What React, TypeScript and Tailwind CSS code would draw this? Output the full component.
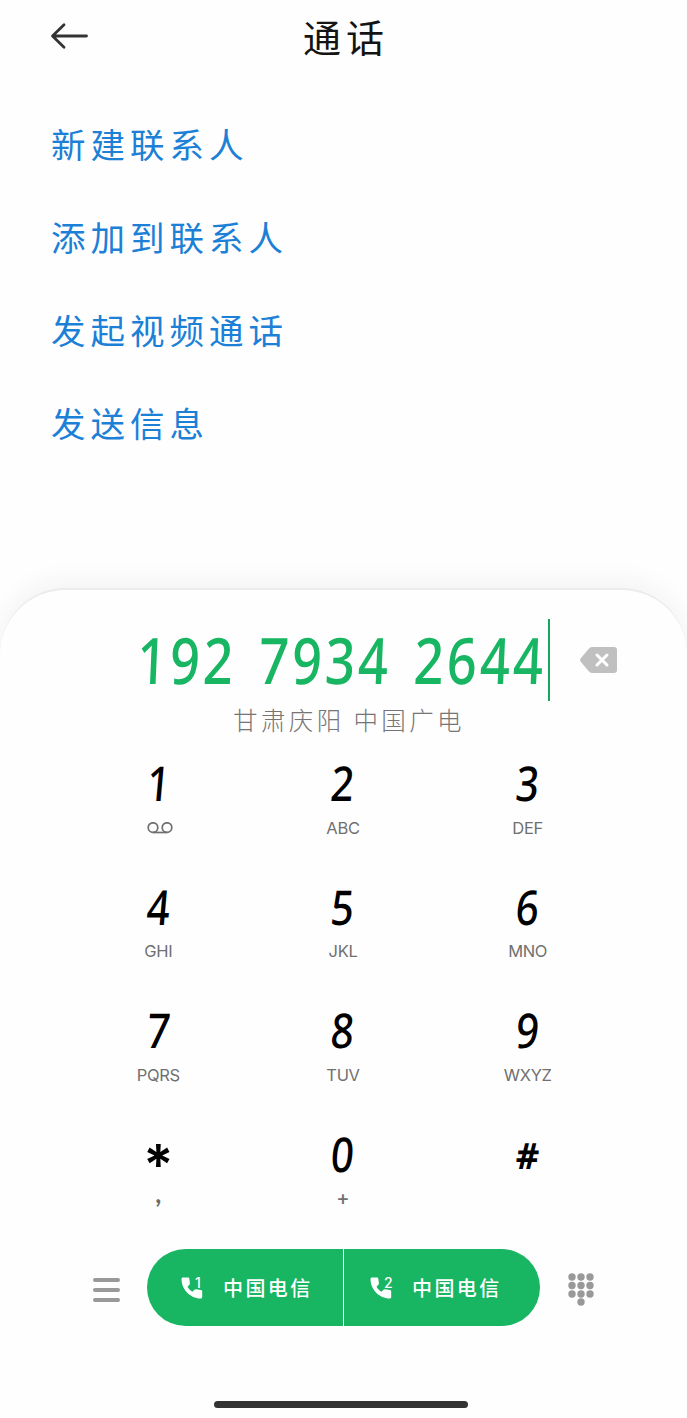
import type { ReactNode } from 'react';

const menuItems = ['新建联系人', '添加到联系人', '发起视频通话', '发送信息'];

const voicemail = (
  <svg width="26" height="12" viewBox="0 0 26 12" fill="none" stroke="currentColor" strokeWidth="1.7" className="ml-1">
    <circle cx="6" cy="5.6" r="4.8" />
    <circle cx="20" cy="5.6" r="4.8" />
    <path d="M6 10.500h14" />
  </svg>
);

const keys: { main: string; sub: ReactNode }[] = [
  { main: '1', sub: voicemail },
  { main: '2', sub: 'ABC' },
  { main: '3', sub: 'DEF' },
  { main: '4', sub: 'GHI' },
  { main: '5', sub: 'JKL' },
  { main: '6', sub: 'MNO' },
  { main: '7', sub: 'PQRS' },
  { main: '8', sub: 'TUV' },
  { main: '9', sub: 'WXYZ' },
  { main: '*', sub: ',' },
  { main: '0', sub: '+' },
  { main: '#', sub: '' },
];

function Key({ main, sub }: { main: string; sub: ReactNode }) {
  if (main === '*') {
    return (
      <button className="flex flex-col items-center h-[123.5px]">
        <span className="h-[50px] leading-[72px] text-[56px] font-semibold font-[Inter,sans-serif]">*</span>
        <span className="h-5 mt-[9px] text-[26px] leading-[10px] font-bold text-[#6b6b6b] font-[Lato,sans-serif]">{sub}</span>
      </button>
    );
  }
  return (
    <button className="flex flex-col items-center h-[123.5px]">
      <span
        className={
          main === '#'
            ? "h-[50px] leading-[54px] text-[36px] font-bold -skew-x-3 font-['Noto_Sans',sans-serif]"
            : "h-[50px] leading-[50px] text-[48px] font-medium -skew-x-6 scale-x-[0.84] font-['Noto_Sans',sans-serif]"
        }
      >
        {main}
      </span>
      <span
        className={
          sub === '+'
            ? 'flex items-center justify-center h-5 mt-[9px] text-[20px] font-medium text-[#707070] font-[Inter,sans-serif]'
            : 'flex items-center justify-center h-5 mt-[10px] text-[16.5px] text-[#707070] font-[Inter,sans-serif] tracking-[-0.3px]'
        }
      >
        {sub}
      </span>
    </button>
  );
}

function CallButton({ sim }: { sim: number }) {
  return (
    <button className={sim === 1 ? 'flex w-[196px] items-center bg-[#18b562] pl-[34px] text-white' : 'flex w-[196px] items-center bg-[#18b562] pl-[26px] text-white'}>
      <span className="flex items-start w-[24px] h-[24px]">
        <svg width="22" height="24" viewBox="0 0 22 24" fill="currentColor" className="shrink-0">
          <path d="M2 1.500h5c.7 0 1.200.5 1.300 1.200l.6 4.600c.1.600-.1 1.100-.5 1.500L6.500 10.800c1.300 2.200 2.700 3.600 5 4.900l2-2c.4-.4.900-.6 1.500-.5l5 .8c.7.1 1.200.6 1.200 1.300v5.700c0 .9-.6 1.500-1.500 1.500C9.300 22.500.500 13.500.500 3c0-.9.600-1.500 1.500-1.500z" />
        </svg>
        <span className="-ml-[8px] text-[14px] leading-[13px] font-medium font-[Inter,sans-serif]">{sim}</span>
      </span>
      <span className="ml-[18px] text-[20px] leading-none font-medium tracking-[2.4px] whitespace-nowrap">中国电信</span>
    </button>
  );
}

export default function App() {
  return (
    <div className="flex flex-col w-full h-[1418px] overflow-hidden bg-[#fefefe] font-['Noto_Sans_CJK_SC',sans-serif]">
      {/* Header */}
      <header className="grid grid-cols-3 items-center h-[72px] px-[50px]">
        <svg width="38" height="28" viewBox="0 0 38 28" fill="none" stroke="#333" strokeWidth="2.800" strokeLinecap="round" strokeLinejoin="round">
          <path d="M36.500 14H3M14 2.800 2.500 14 14 25.200" />
        </svg>
        <h1 className="text-center text-[38px] leading-none tracking-[5px] pl-[5px] text-[#141414] whitespace-nowrap">通话</h1>
      </header>

      {/* Actions for the typed number */}
      <nav className="flex flex-col h-[516px] pt-[25px] pl-[51px]">
        {menuItems.map((item) => (
          <a key={item} className="h-[93px] text-[34.500px] leading-[93px] tracking-[5px] text-[#1b80d6]">
            {item}
          </a>
        ))}
      </nav>

      {/* Dialer sheet */}
      <main className="flex flex-col h-[830px] rounded-t-[66px] bg-[#fefefe] border-t-2 border-[#ebebeb] shadow-[0_-6px_28px_rgba(0,0,0,0.05)]">
        <div className="flex items-center h-[82px] mt-[29px] pl-[137px]">
          <div className="w-[411px] h-[82px]">
            <span className="inline-block origin-left scale-x-[0.82] -skew-x-3 text-[64px] leading-[82px] font-medium tracking-[3.800px] [word-spacing:7px] text-[#18b562] whitespace-nowrap font-['Noto_Sans',sans-serif]">
              192 7934 2644
            </span>
          </div>
          <span className="w-[2px] h-[82px] bg-[#18a560]" />
          <svg width="37" height="26" viewBox="0 0 37 26" className="ml-[30px]">
            <path d="M12 0h22q3 0 3 3v20q0 3-3 3H12q-2 0-3.500-2L1 15q-2-2 0-4L8.500 2Q10 0 12 0z" fill="#c0c0c0" />
            <path d="m17 8 10 10m0-10L17 18" stroke="#fff" strokeWidth="3" strokeLinecap="round" />
          </svg>
        </div>
        <p className="h-[38px] pl-[233px] text-[24.500px] leading-[38px] font-light tracking-[3.400px] text-[#757575] whitespace-nowrap">
          甘肃庆阳 中国广电
        </p>

        <div className="grid grid-cols-3 w-[554px] mt-[19px] ml-[66px] text-black">
          {keys.map((key) => (
            <Key key={key.main} main={key.main} sub={key.sub} />
          ))}
        </div>

        {/* Call bar */}
        <div className="flex items-center h-[77px] -mt-[3px] pl-[93px]">
          <div className="flex flex-col gap-[6px] w-[27px] mt-1">
            <span className="h-[4px] rounded-full bg-[#999]" />
            <span className="h-[4px] rounded-full bg-[#999]" />
            <span className="h-[4px] rounded-full bg-[#999]" />
          </div>
          <div className="flex w-[393px] h-[77px] ml-[27px] gap-px overflow-hidden rounded-full bg-white">
            <CallButton sim={1} />
            <CallButton sim={2} />
          </div>
          <svg width="26" height="33" viewBox="0 0 26 33" fill="#999" className="ml-[28px] mt-[4px]">
            {[4, 12.5, 21].map((y) =>
              [4, 13, 22].map((x) => <circle key={`${x}-${y}`} cx={x} cy={y} r="3.700" />)
            )}
            <circle cx="13" cy="29" r="3.700" />
          </svg>
        </div>

        <div className="w-[254px] h-[7px] mt-[75px] ml-[214px] rounded-full bg-[#333]" />
      </main>
    </div>
  );
}
